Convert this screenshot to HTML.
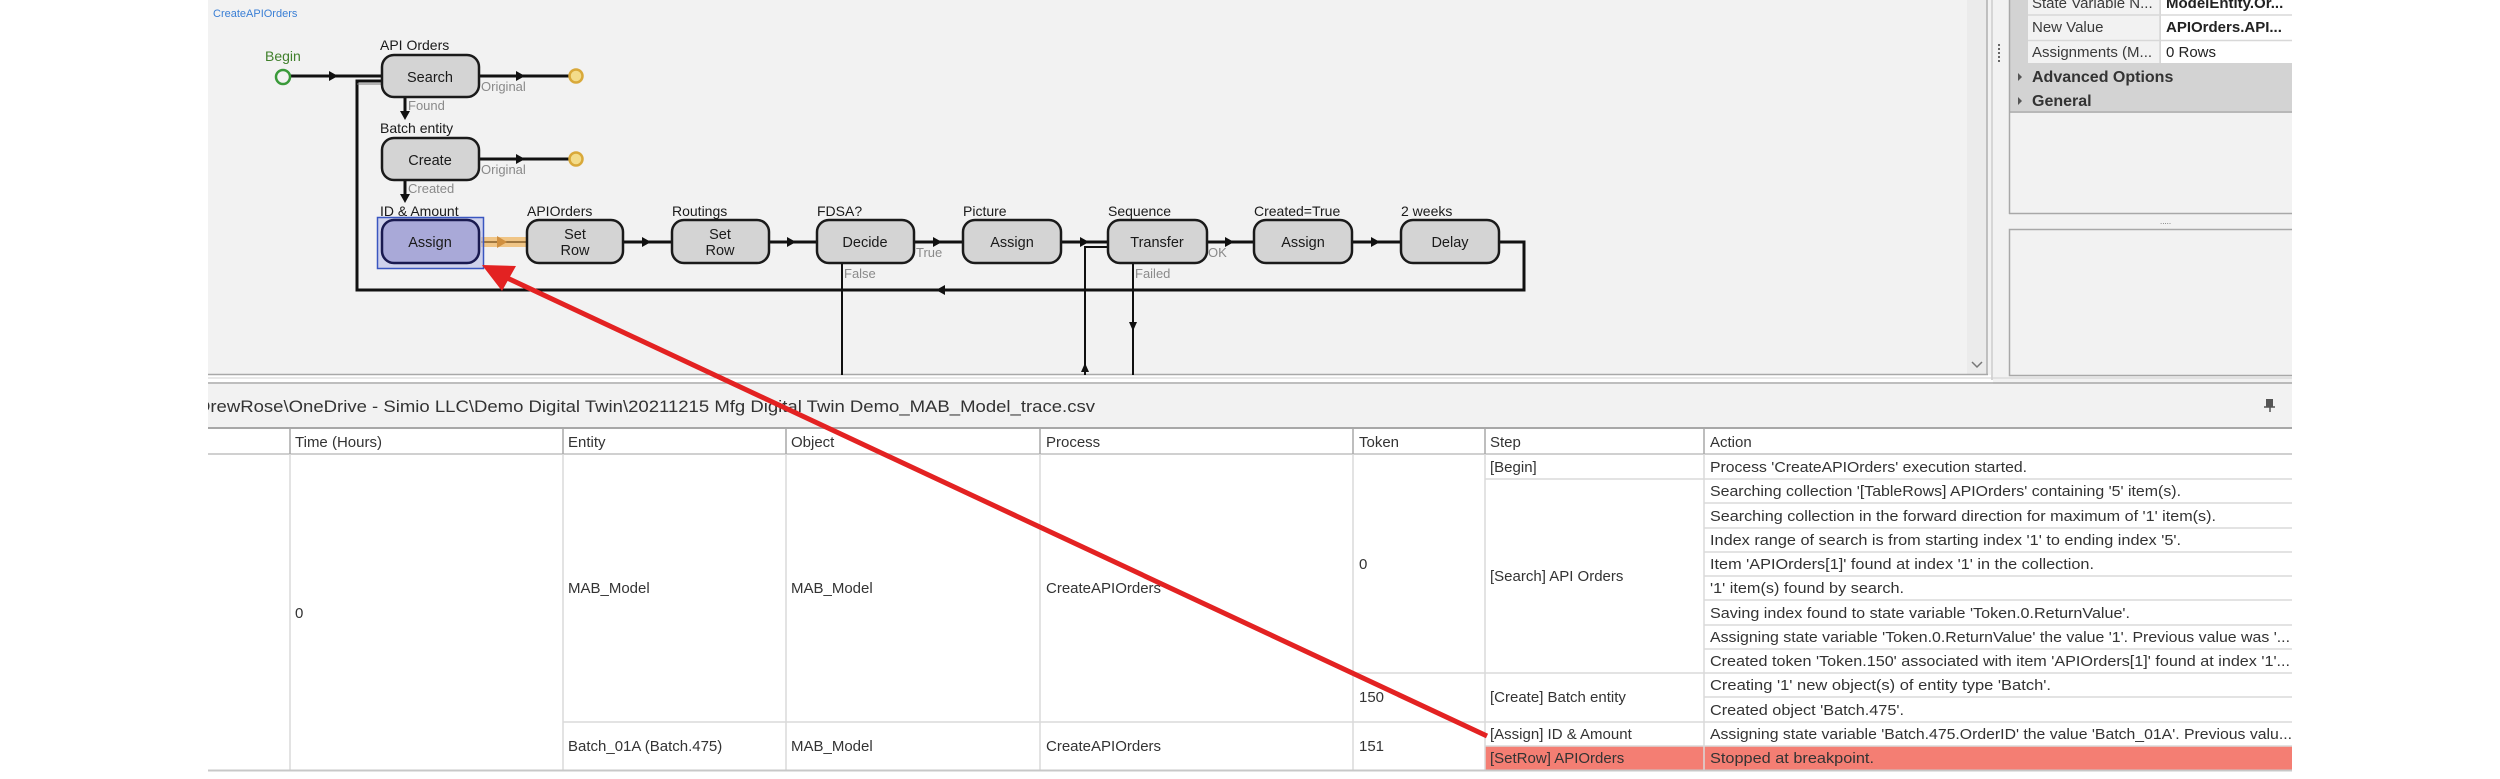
<!DOCTYPE html>
<html><head><meta charset="utf-8"><style>
html,body{margin:0;padding:0;background:#fff;}
svg{display:block;font-family:"Liberation Sans",Tahoma,sans-serif;}
</style></head><body>
<svg width="2500" height="779" viewBox="0 0 2500 779" xmlns="http://www.w3.org/2000/svg">
<defs>
<clipPath id="cl"><rect x="208" y="0" width="2084" height="779"/></clipPath>
<clipPath id="pv"><rect x="2161" y="0" width="131" height="70"/></clipPath>
</defs>
<g clip-path="url(#cl)">
<!-- canvas -->
<rect x="208" y="0" width="1783" height="375" fill="#f2f2f2"/>
<rect x="1967" y="0" width="20" height="374" fill="#ebebeb"/>
<line x1="1987" y1="0" x2="1987" y2="375" stroke="#b0b0b0" stroke-width="1.5"/>
<line x1="1992" y1="0" x2="1992" y2="380" stroke="#c8c8c8" stroke-width="1.5"/>
<path d="M1972 362 l5 5 l5 -5" fill="none" stroke="#777" stroke-width="1.5"/>
<rect x="1993" y="0" width="300" height="384" fill="#f2f2f2"/>
<line x1="208" y1="374.5" x2="1988" y2="374.5" stroke="#a8a8a8" stroke-width="1.5"/>
<line x1="208" y1="378" x2="2292" y2="378" stroke="#d0d0d0" stroke-width="1"/>
<line x1="208" y1="383" x2="2292" y2="383" stroke="#a8a8a8" stroke-width="1.5"/>
<rect x="208" y="384" width="2084" height="44" fill="#f2f2f2"/>

<text x="213" y="17" font-size="11" fill="#3a7fd5">CreateAPIOrders</text>

<!-- connectors -->
<g stroke="#111" stroke-width="3" fill="none">
<line x1="290" y1="76" x2="382" y2="76"/>
<line x1="479" y1="76" x2="570" y2="76"/>
<line x1="479" y1="159" x2="570" y2="159"/>
<line x1="405" y1="97" x2="405" y2="114"/>
<line x1="405" y1="180" x2="405" y2="197"/>
<line x1="623" y1="242" x2="672" y2="242"/>
<line x1="769" y1="242" x2="817" y2="242"/>
<line x1="914" y1="242" x2="963" y2="242"/>
<line x1="1061" y1="242" x2="1108" y2="242"/>
<line x1="1207" y1="242" x2="1254" y2="242"/>
<line x1="1352" y1="242" x2="1401" y2="242"/>
<polyline points="1499,242 1524,242 1524,290 357,290 357,81 382,81"/>
<polyline points="1108,247 1085,247 1085,375" stroke-width="2"/>
<line x1="842" y1="263" x2="842" y2="375" stroke-width="2"/>
<line x1="1133" y1="263" x2="1133" y2="375" stroke-width="2"/>
</g>
<line x1="357" y1="84" x2="382" y2="84" stroke="#777" stroke-width="1"/>
<g fill="#111">
<path d="M329 71 l9 5 l-9 5z"/>
<path d="M516 71 l9 5 l-9 5z"/>
<path d="M516 154 l9 5 l-9 5z"/>
<path d="M400 111 l5 9 l5 -9z"/>
<path d="M400 194 l5 9 l5 -9z"/>
<path d="M642 237 l9 5 l-9 5z"/>
<path d="M787 237 l9 5 l-9 5z"/>
<path d="M933 237 l9 5 l-9 5z"/>
<path d="M1080 237 l9 5 l-9 5z"/>
<path d="M1225 237 l9 5 l-9 5z"/>
<path d="M1371 237 l9 5 l-9 5z"/>
<path d="M945 285 l-9 5 l9 5z"/>
<path d="M1081 372 l4 -9 l4 9z"/>
<path d="M1129 322 l4 9 l4 -9z"/>
</g>
<!-- orange -->
<rect x="481" y="237" width="46" height="10" fill="#efc07a" opacity="0.9"/>
<line x1="481" y1="242" x2="527" y2="242" stroke="#a07840" stroke-width="2"/>
<path d="M497 236 l10 6 l-10 6z" fill="#d09040"/>

<circle cx="283" cy="77" r="7" fill="none" stroke="#3a9a3a" stroke-width="2.5"/>
<circle cx="576" cy="76" r="6.5" fill="#f3dc8a" stroke="#d9a93a" stroke-width="2.5"/>
<circle cx="576" cy="159" r="6.5" fill="#f3dc8a" stroke="#d9a93a" stroke-width="2.5"/>

<!-- selection -->
<rect x="377.5" y="217.5" width="106" height="51" fill="#b8bce8" fill-opacity="0.6" stroke="#3a56c0" stroke-width="1.5"/>

<!-- boxes -->
<g stroke="#1a1a1a" stroke-width="2.5" fill="#d4d4d4">
<rect x="382" y="55" width="97" height="42" rx="12"/>
<rect x="382" y="138" width="97" height="42" rx="12"/>
<rect x="382" y="220" width="97" height="43" rx="12" fill="#a9a9d8" stroke="#1a1a50"/>
<rect x="527" y="220" width="96" height="43" rx="12"/>
<rect x="672" y="220" width="97" height="43" rx="12"/>
<rect x="817" y="220" width="97" height="43" rx="12"/>
<rect x="963" y="220" width="98" height="43" rx="12"/>
<rect x="1108" y="220" width="99" height="43" rx="12"/>
<rect x="1254" y="220" width="98" height="43" rx="12"/>
<rect x="1401" y="220" width="98" height="43" rx="12"/>
</g>
<g font-size="14.5" fill="#1a1a1a" text-anchor="middle">
<text x="430" y="82">Search</text>
<text x="430" y="165">Create</text>
<text x="430" y="247">Assign</text>
<text x="575" y="239">Set</text><text x="575" y="255">Row</text>
<text x="720" y="239">Set</text><text x="720" y="255">Row</text>
<text x="865" y="247">Decide</text>
<text x="1012" y="247">Assign</text>
<text x="1157" y="247">Transfer</text>
<text x="1303" y="247">Assign</text>
<text x="1450" y="247">Delay</text>
</g>
<g font-size="14" fill="#1a1a1a">
<text x="380" y="50">API Orders</text>
<text x="380" y="133">Batch entity</text>
<text x="380" y="216">ID &amp; Amount</text>
<text x="527" y="216">APIOrders</text>
<text x="672" y="216">Routings</text>
<text x="817" y="216">FDSA?</text>
<text x="963" y="216">Picture</text>
<text x="1108" y="216">Sequence</text>
<text x="1254" y="216">Created=True</text>
<text x="1401" y="216">2 weeks</text>
<text x="265" y="61" fill="#3f7f2a">Begin</text>
</g>
<g font-size="13" fill="#8a8a8a">
<text x="481" y="91">Original</text>
<text x="481" y="174">Original</text>
<text x="408" y="110">Found</text>
<text x="408" y="193">Created</text>
<text x="916" y="257">True</text>
<text x="1208" y="257">OK</text>
<text x="844" y="278">False</text>
<text x="1135" y="278">Failed</text>
</g>

<!-- property panel -->
<line x1="1999" y1="44" x2="1999" y2="62" stroke="#666" stroke-width="2" stroke-dasharray="2,2"/>
<rect x="2009" y="0" width="283" height="112" fill="#d3d3d3"/>
<rect x="2028" y="0" width="132" height="63" fill="#f2f2f2"/>
<rect x="2161" y="0" width="131" height="63" fill="#fff"/>
<g stroke="#d8d8d8" stroke-width="1.5"><line x1="2028" y1="15" x2="2292" y2="15"/><line x1="2028" y1="40.5" x2="2292" y2="40.5"/><line x1="2160" y1="0" x2="2160" y2="63"/></g>
<g font-size="15" fill="#3a3a3a">
<text x="2032" y="8">State Variable N...</text>
<text x="2032" y="32">New Value</text>
<text x="2032" y="57">Assignments (M...</text>
</g>
<g clip-path="url(#pv)" font-size="15" fill="#222">
<text x="2166" y="8" font-weight="bold">ModelEntity.Or...</text>
<text x="2166" y="32" font-weight="bold">APIOrders.API...</text>
<text x="2166" y="57">0 Rows</text>
</g>
<g font-size="16" font-weight="bold" fill="#333">
<text x="2032" y="82">Advanced Options</text>
<text x="2032" y="106">General</text>
</g>
<path d="M2018 73 l4 4 l-4 4z M2018 97 l4 4 l-4 4z" fill="#555"/>
<line x1="2009" y1="112" x2="2292" y2="112" stroke="#b8b8b8" stroke-width="2"/>
<line x1="2009.5" y1="0" x2="2009.5" y2="214" stroke="#a8a8a8" stroke-width="1.5"/>
<line x1="2009" y1="213.5" x2="2292" y2="213.5" stroke="#a8a8a8" stroke-width="1.5"/>
<text x="2160" y="224" font-size="8" fill="#666">.....</text>
<rect x="2009.5" y="229.5" width="290" height="146" fill="#f2f2f2" stroke="#a8a8a8" stroke-width="1.5"/>
<rect x="2266" y="399" width="7" height="8" fill="#555"/><line x1="2264" y1="407" x2="2275" y2="407" stroke="#555" stroke-width="1.5"/><line x1="2270" y1="407" x2="2270" y2="412" stroke="#555" stroke-width="1.5"/>

<!-- path -->
<text x="197" y="412" font-size="17" fill="#333" textLength="898" lengthAdjust="spacingAndGlyphs">DrewRose\OneDrive - Simio LLC\Demo Digital Twin\20211215 Mfg Digital Twin Demo_MAB_Model_trace.csv</text>

<!-- table -->
<rect x="208" y="428" width="2084" height="343" fill="#fff"/>
<rect x="1485" y="746" width="807" height="24" fill="#f47e73"/>
<line x1="208" y1="428" x2="2292" y2="428" stroke="#a8a8a8" stroke-width="2"/>
<line x1="208" y1="454" x2="2292" y2="454" stroke="#c0c0c0" stroke-width="1.5"/>
<g stroke="#a8a8a8" stroke-width="1.5">
<line x1="290" y1="428" x2="290" y2="454"/><line x1="563" y1="428" x2="563" y2="454"/><line x1="786" y1="428" x2="786" y2="454"/><line x1="1040" y1="428" x2="1040" y2="454"/><line x1="1353" y1="428" x2="1353" y2="454"/><line x1="1485" y1="428" x2="1485" y2="454"/><line x1="1704" y1="428" x2="1704" y2="454"/>
</g>
<g stroke="#dadada" stroke-width="1.5">
<line x1="290" y1="454" x2="290" y2="770"/><line x1="563" y1="454" x2="563" y2="770"/><line x1="786" y1="454" x2="786" y2="770"/><line x1="1040" y1="454" x2="1040" y2="770"/><line x1="1353" y1="454" x2="1353" y2="770"/><line x1="1485" y1="454" x2="1485" y2="770"/><line x1="1704" y1="454" x2="1704" y2="770"/>
<line x1="1704" y1="479" x2="2292" y2="479"/><line x1="1704" y1="503" x2="2292" y2="503"/><line x1="1704" y1="528" x2="2292" y2="528"/><line x1="1704" y1="552" x2="2292" y2="552"/><line x1="1704" y1="576" x2="2292" y2="576"/><line x1="1704" y1="600" x2="2292" y2="600"/><line x1="1704" y1="625" x2="2292" y2="625"/><line x1="1704" y1="649" x2="2292" y2="649"/><line x1="1704" y1="697" x2="2292" y2="697"/>
<line x1="1485" y1="479" x2="1704" y2="479"/>
<line x1="1353" y1="673" x2="2292" y2="673"/>
<line x1="563" y1="722" x2="2292" y2="722"/>
<line x1="1485" y1="746" x2="2292" y2="746"/>
</g>
<line x1="208" y1="770.5" x2="2292" y2="770.5" stroke="#c8c8c8" stroke-width="2"/>
<g font-size="15" fill="#333">
<text x="295" y="447">Time (Hours)</text>
<text x="568" y="447">Entity</text>
<text x="791" y="447">Object</text>
<text x="1046" y="447">Process</text>
<text x="1359" y="447">Token</text>
<text x="1490" y="447">Step</text>
<text x="1710" y="447">Action</text>
<text x="295" y="618">0</text>
<text x="568" y="593">MAB_Model</text>
<text x="791" y="593">MAB_Model</text>
<text x="1046" y="593">CreateAPIOrders</text>
<text x="568" y="751">Batch_01A (Batch.475)</text>
<text x="791" y="751">MAB_Model</text>
<text x="1046" y="751">CreateAPIOrders</text>
<text x="1359" y="569">0</text>
<text x="1359" y="702">150</text>
<text x="1359" y="751">151</text>
<text x="1490" y="472">[Begin]</text>
<text x="1490" y="581">[Search] API Orders</text>
<text x="1490" y="702">[Create] Batch entity</text>
<text x="1490" y="739">[Assign] ID &amp; Amount</text>
<text x="1490" y="763">[SetRow] APIOrders</text>
<text x="1710" y="472" textLength="317" lengthAdjust="spacingAndGlyphs">Process 'CreateAPIOrders' execution started.</text>
<text x="1710" y="496" textLength="471" lengthAdjust="spacingAndGlyphs">Searching collection '[TableRows] APIOrders' containing '5' item(s).</text>
<text x="1710" y="521" textLength="506" lengthAdjust="spacingAndGlyphs">Searching collection in the forward direction for maximum of '1' item(s).</text>
<text x="1710" y="545" textLength="471" lengthAdjust="spacingAndGlyphs">Index range of search is from starting index '1' to ending index '5'.</text>
<text x="1710" y="569" textLength="384" lengthAdjust="spacingAndGlyphs">Item 'APIOrders[1]' found at index '1' in the collection.</text>
<text x="1710" y="593" textLength="194" lengthAdjust="spacingAndGlyphs">'1' item(s) found by search.</text>
<text x="1710" y="618" textLength="420" lengthAdjust="spacingAndGlyphs">Saving index found to state variable 'Token.0.ReturnValue'.</text>
<text x="1710" y="642" textLength="580" lengthAdjust="spacingAndGlyphs">Assigning state variable 'Token.0.ReturnValue' the value '1'. Previous value was '...</text>
<text x="1710" y="666" textLength="580" lengthAdjust="spacingAndGlyphs">Created token 'Token.150' associated with item 'APIOrders[1]' found at index '1'...</text>
<text x="1710" y="690" textLength="341" lengthAdjust="spacingAndGlyphs">Creating '1' new object(s) of entity type 'Batch'.</text>
<text x="1710" y="715" textLength="194" lengthAdjust="spacingAndGlyphs">Created object 'Batch.475'.</text>
<text x="1710" y="739" textLength="582" lengthAdjust="spacingAndGlyphs">Assigning state variable 'Batch.475.OrderID' the value 'Batch_01A'. Previous valu...</text>
<text x="1710" y="763" textLength="164" lengthAdjust="spacingAndGlyphs">Stopped at breakpoint.</text>
</g>

<!-- red arrow -->
<line x1="1487" y1="736" x2="505" y2="277" stroke="#e32222" stroke-width="5"/>
<path d="M482 265 L502 291 L516 266 Z" fill="#e32222"/>
</g>
</svg>
</body></html>
